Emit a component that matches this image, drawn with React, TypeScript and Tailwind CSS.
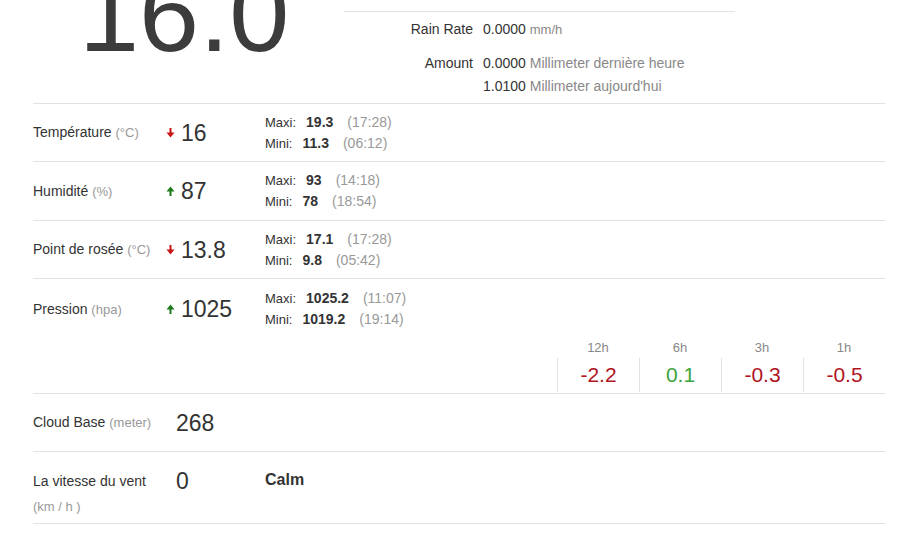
import type { ReactNode } from 'react'

const font = { fontFamily: '"Liberation Sans", Arial, sans-serif' }

function Arrow({ dir }: { dir: 'up' | 'down' }) {
  const color = dir === 'up' ? '#1c7a1c' : '#c81414'
  return (
    <svg width="9" height="11" viewBox="0 0 9 11" className="shrink-0">
      {dir === 'down' ? (
        <g fill={color}>
          <rect x="3.5" y="1" width="2" height="6" />
          <path d="M0.5 5.5 L8.5 5.5 L4.5 10.5 Z" />
        </g>
      ) : (
        <g fill={color}>
          <rect x="3.5" y="4" width="2" height="6" />
          <path d="M0.5 5.5 L8.5 5.5 L4.5 0.5 Z" />
        </g>
      )}
    </svg>
  )
}

function Label({ name, unit }: { name: string; unit: string }) {
  return (
    <div className="w-[133px] shrink-0 text-[14px] text-[#333]">
      {name} <span className="text-[13px] text-[#999]">{unit}</span>
    </div>
  )
}

function MinMax({ max, maxAt, min, minAt }: { max: string; maxAt: string; min: string; minAt: string }) {
  return (
    <div className="text-[13px] leading-[20px] text-[#333]">
      <div>
        Maxi:<b className="ml-[10px] text-[14px]">{max}</b>
        <span className="ml-[14px] text-[14px] text-[#999]">({maxAt})</span>
      </div>
      <div>
        Mini:<b className="ml-[10px] text-[14px]">{min}</b>
        <span className="ml-[14px] text-[14px] text-[#999]">({minAt})</span>
      </div>
    </div>
  )
}

function Row({ children, className = '' }: { children: ReactNode; className?: string }) {
  return <div className={`border-b border-[#e2e2e2] ${className}`}>{children}</div>
}

const measures = [
  { name: 'Température', unit: '(°C)', dir: 'down' as const, value: '16', max: '19.3', maxAt: '17:28', min: '11.3', minAt: '06:12', h: 'h-[58px]' },
  { name: 'Humidité', unit: '(%)', dir: 'up' as const, value: '87', max: '93', maxAt: '14:18', min: '78', minAt: '18:54', h: 'h-[59px]' },
  { name: 'Point de rosée', unit: '(°C)', dir: 'down' as const, value: '13.8', max: '17.1', maxAt: '17:28', min: '9.8', minAt: '05:42', h: 'h-[58px]' },
]

const trend = [
  { h: '12h', v: '-2.2' },
  { h: '6h', v: '0.1' },
  { h: '3h', v: '-0.3' },
  { h: '1h', v: '-0.5' },
]

function Reading({ dir, value }: { dir: 'up' | 'down'; value: string }) {
  return (
    <div className="w-[99px] shrink-0 flex items-center gap-[6px]">
      <Arrow dir={dir} />
      <span className="text-[23px] leading-[26px] text-[#333]">{value}</span>
    </div>
  )
}

export default function App() {
  return (
    <div className="h-[536px] overflow-hidden bg-white" style={font}>
      <div className="ml-[33px] mr-[12px] -mt-[40px]">
        {/* current temp + rain */}
        <Row className="flex h-[144px]">
          <div className="w-[311px] shrink-0 pl-[46px] text-[108px] leading-none text-[#3c3c3c]">16.0</div>
          <div className="w-[391px] pt-[51px]">
            <div className="border-t border-[#e2e2e2] pt-[5px] flex text-[14px] leading-[24px]">
              <div className="w-[129px] text-right text-[#333]">Rain Rate</div>
              <div className="ml-[10px] text-[#333]">
                0.0000 <span className="text-[13px] text-[#888]">mm/h</span>
              </div>
            </div>
            <div className="flex text-[14px] leading-[24px] pt-[9px]">
              <div className="w-[129px] text-right text-[#333]">Amount</div>
              <div className="ml-[10px] text-[#333]">
                <div>0.0000 <span className="text-[#888]">Millimeter dernière heure</span></div>
                <div className="-mt-[1px]">1.0100 <span className="text-[#888]">Millimeter aujourd'hui</span></div>
              </div>
            </div>
          </div>
        </Row>

        {measures.map((m) => (
          <Row key={m.name} className={`flex items-center ${m.h}`}>
            <Label name={m.name} unit={m.unit} />
            <Reading dir={m.dir} value={m.value} />
            <MinMax max={m.max} maxAt={m.maxAt} min={m.min} minAt={m.minAt} />
          </Row>
        ))}

        <Row className="h-[115px] pt-[9px]">
          <div className="flex items-center">
            <Label name="Pression" unit="(hpa)" />
            <Reading dir="up" value="1025" />
            <MinMax max="1025.2" maxAt="11:07" min="1019.2" minAt="19:14" />
          </div>
          <div className="mt-[8px] flex justify-end">
            {trend.map((t) => (
              <div key={t.h} className="w-[82px] text-center">
                <div className="text-[13px] leading-[20px] text-[#888]">{t.h}</div>
                <div
                  className={`border-l border-[#e2e2e2] h-[34px] flex items-center justify-center text-[21px] ${
                    t.v.startsWith('-') ? 'text-[#b0141e]' : 'text-[#3aa53a]'
                  }`}
                >
                  {t.v}
                </div>
              </div>
            ))}
          </div>
        </Row>

        <Row className="flex items-center h-[58px]">
          <Label name="Cloud Base" unit="(meter)" />
          <div className="pl-[10px] text-[23px] leading-[26px] text-[#333]">268</div>
        </Row>

        <Row className="flex items-start h-[72px] pt-[17px]">
          <div className="w-[133px] shrink-0 text-[14px] leading-[25px] text-[#333]">
            <div>La vitesse du vent</div>
            <div className="text-[13px] text-[#999]">(km / h )</div>
          </div>
          <div className="w-[99px] shrink-0 pl-[10px] text-[23px] leading-[25px] text-[#333]">0</div>
          <div className="text-[16px] font-bold leading-[22px] text-[#333]">Calm</div>
        </Row>
      </div>
    </div>
  )
}
